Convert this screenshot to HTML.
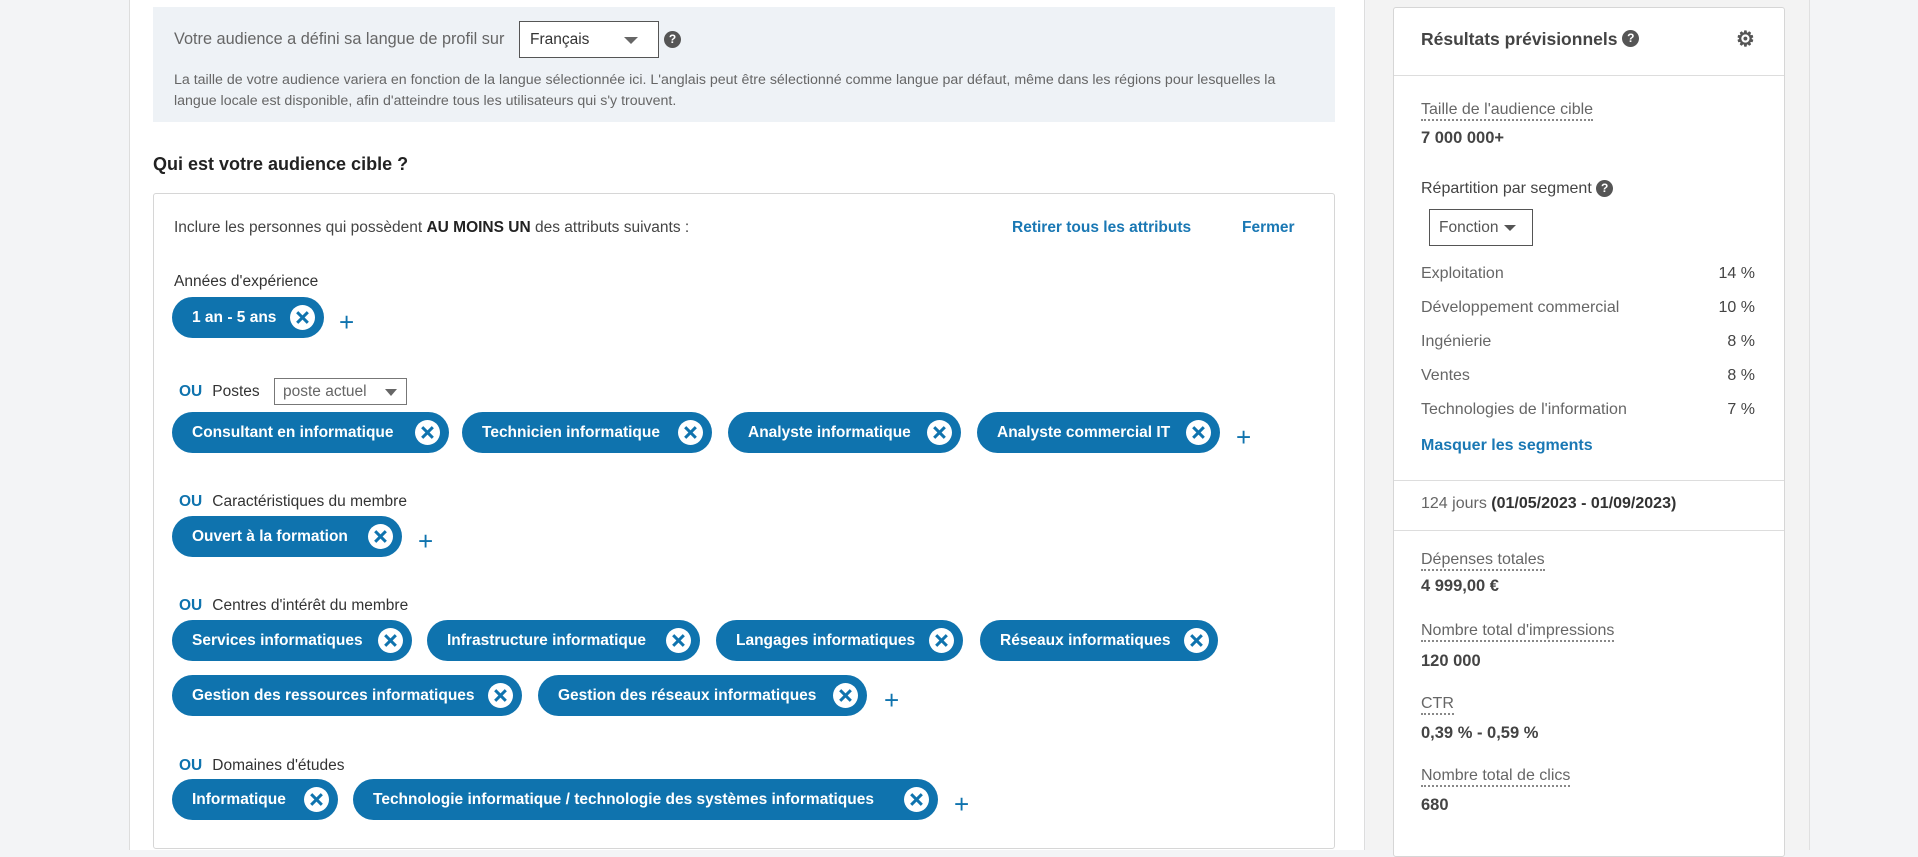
<!DOCTYPE html>
<html><head><meta charset="utf-8"><style>
*{margin:0;padding:0;box-sizing:border-box}
body{width:1918px;height:850px;overflow:hidden;background:#f3f4f6;font-family:"Liberation Sans",sans-serif;position:relative;color:#333}
.a{position:absolute;white-space:nowrap}
.main{position:absolute;left:129px;top:0;width:1236px;height:850px;background:#fff;border-left:1px solid #ddd;border-right:1px solid #ddd}
.gap{position:absolute;left:1366px;top:0;width:444px;height:850px;background:#f3f3f3;border-right:1px solid #e0e0e0}
.lang{position:absolute;left:153px;top:7px;width:1182px;height:115px;background:#eef2f6}
.box{position:absolute;left:153px;top:193px;width:1182px;height:656px;border:1px solid #d6d6d6;border-radius:3px;background:#fff}
.pill{position:absolute;height:41px;border-radius:21px;background:#0f73ae;color:#fff;font-weight:bold;font-size:15.5px;line-height:41px;padding-left:20px;white-space:nowrap}
.pill i{position:absolute;right:9px;top:8px;width:25px;height:25px;border-radius:50%;background:#fff}
.pill i:before,.pill i:after{content:"";position:absolute;left:11px;top:5px;width:3px;height:15px;background:#0f73ae;transform:rotate(45deg)}
.pill i:after{transform:rotate(-45deg)}
.plus{position:absolute;color:#0f73ae;font-size:26px;line-height:26px}
.lbl{position:absolute;font-size:15.5px;color:#333;white-space:nowrap}
.ou{color:#0f73ae;font-weight:bold;margin-right:10px}
.q{display:inline-block;width:17px;height:17px;border-radius:50%;background:#555;color:#fff;font-size:12px;font-weight:bold;text-align:center;line-height:17px;vertical-align:middle}
.panel{position:absolute;left:1393px;top:7px;width:392px;height:850px;background:#fff;border:1px solid #d6d6d6;border-radius:3px}
.dl{border-bottom:2px dotted #888;padding-bottom:1px;color:#666}
.rt{font-size:16px;color:#666}
.val{font-size:16.5px;color:#444;font-weight:bold}
</style></head><body>
<div class="main"></div>
<div class="gap"></div>
<div class="lang"></div>
<div class="a" style="left:174px;top:30px;font-size:16.3px;color:#666">Votre audience a défini sa langue de profil sur</div>
<div class="a" style="left:519px;top:21px;width:140px;height:37px;border:1px solid #555;background:#fff;font-size:15.5px;line-height:35px;padding-left:10px;color:#333">Français<span style="position:absolute;right:20px;top:15px;border-left:7px solid transparent;border-right:7px solid transparent;border-top:7px solid #666"></span></div>
<div class="a" style="left:664px;top:31px"><span class="q">?</span></div>
<div class="a" style="left:174px;top:70px;font-size:14.2px;color:#666;line-height:21px;white-space:normal;width:1140px">La taille de votre audience variera en fonction de la langue sélectionnée ici. L'anglais peut être sélectionné comme langue par défaut, même dans les régions pour lesquelles la langue locale est disponible, afin d'atteindre tous les utilisateurs qui s'y trouvent.</div>
<div class="a" style="left:153px;top:154px;font-size:18px;font-weight:bold;color:#222">Qui est votre audience cible ?</div>
<div class="box"></div>
<div class="a" style="left:174px;top:219px;font-size:15.5px;color:#444">Inclure les personnes qui possèdent <b style="color:#222">AU MOINS UN</b> des attributs suivants :</div>
<div class="a" style="left:1012px;top:219px;font-size:15.5px;font-weight:bold;color:#1a78b4">Retirer tous les attributs</div>
<div class="a" style="left:1242px;top:219px;font-size:15.5px;font-weight:bold;color:#1a78b4">Fermer</div>

<div class="lbl" style="left:174px;top:273px">Années d'expérience</div>
<div class="pill" style="left:172px;top:297px;width:152px">1 an - 5 ans<i></i></div>
<div class="plus" style="left:339px;top:309px">+</div>

<div class="lbl" style="left:179px;top:383px"><span class="ou">OU</span>Postes</div>
<div class="a" style="left:274px;top:378px;width:133px;height:27px;border:1px solid #777;font-size:15.5px;color:#666;line-height:25px;padding-left:8px">poste actuel<span style="position:absolute;right:9px;top:10px;border-left:6px solid transparent;border-right:6px solid transparent;border-top:7px solid #666"></span></div>
<div class="pill" style="left:172px;top:412px;width:277px">Consultant en informatique<i></i></div>
<div class="pill" style="left:462px;top:412px;width:250px">Technicien informatique<i></i></div>
<div class="pill" style="left:728px;top:412px;width:233px">Analyste informatique<i></i></div>
<div class="pill" style="left:977px;top:412px;width:243px">Analyste commercial IT<i></i></div>
<div class="plus" style="left:1236px;top:424px">+</div>

<div class="lbl" style="left:179px;top:493px"><span class="ou">OU</span>Caractéristiques du membre</div>
<div class="pill" style="left:172px;top:516px;width:230px">Ouvert à la formation<i></i></div>
<div class="plus" style="left:418px;top:528px">+</div>

<div class="lbl" style="left:179px;top:597px"><span class="ou">OU</span>Centres d'intérêt du membre</div>
<div class="pill" style="left:172px;top:620px;width:240px">Services informatiques<i></i></div>
<div class="pill" style="left:427px;top:620px;width:273px">Infrastructure informatique<i></i></div>
<div class="pill" style="left:716px;top:620px;width:247px">Langages informatiques<i></i></div>
<div class="pill" style="left:980px;top:620px;width:238px">Réseaux informatiques<i></i></div>
<div class="pill" style="left:172px;top:675px;width:350px">Gestion des ressources informatiques<i></i></div>
<div class="pill" style="left:538px;top:675px;width:329px">Gestion des réseaux informatiques<i></i></div>
<div class="plus" style="left:884px;top:687px">+</div>

<div class="lbl" style="left:179px;top:757px"><span class="ou">OU</span>Domaines d'études</div>
<div class="pill" style="left:172px;top:779px;width:166px">Informatique<i></i></div>
<div class="pill" style="left:353px;top:779px;width:585px">Technologie informatique / technologie des systèmes informatiques<i></i></div>
<div class="plus" style="left:954px;top:791px">+</div>

<div class="panel"></div>
<div class="a" style="left:1421px;top:29px;font-size:17.5px;font-weight:bold;color:#444">Résultats prévisionnels <span class="q" style="margin-top:-3px">?</span></div>
<div class="a" style="left:1736px;top:27px;font-size:21px;color:#555;font-weight:bold">⚙</div>
<div class="a" style="left:1394px;top:75px;width:390px;height:1px;background:#ddd"></div>
<div class="a rt" style="left:1421px;top:101px"><span class="dl">Taille de l'audience cible</span></div>
<div class="a val" style="left:1421px;top:129px">7 000 000+</div>
<div class="a" style="left:1421px;top:180px;font-size:16px;color:#444">Répartition par segment <span class="q">?</span></div>
<div class="a" style="left:1429px;top:209px;width:104px;height:37px;border:1px solid #555;font-size:15.5px;color:#555;line-height:35px;padding-left:9px">Fonction<span style="position:absolute;right:16px;top:15px;border-left:6px solid transparent;border-right:6px solid transparent;border-top:6px solid #555"></span></div>
<div class="a rt" style="left:1421px;top:265px">Exploitation</div><div class="a rt" style="left:1700px;top:265px;width:55px;text-align:right;color:#444">14 %</div>
<div class="a rt" style="left:1421px;top:299px">Développement commercial</div><div class="a rt" style="left:1700px;top:299px;width:55px;text-align:right;color:#444">10 %</div>
<div class="a rt" style="left:1421px;top:333px">Ingénierie</div><div class="a rt" style="left:1700px;top:333px;width:55px;text-align:right;color:#444">8 %</div>
<div class="a rt" style="left:1421px;top:367px">Ventes</div><div class="a rt" style="left:1700px;top:367px;width:55px;text-align:right;color:#444">8 %</div>
<div class="a rt" style="left:1421px;top:401px">Technologies de l'information</div><div class="a rt" style="left:1700px;top:401px;width:55px;text-align:right;color:#444">7 %</div>
<div class="a" style="left:1421px;top:437px;font-size:16px;font-weight:bold;color:#1a78b4">Masquer les segments</div>
<div class="a" style="left:1394px;top:480px;width:390px;height:1px;background:#ddd"></div>
<div class="a rt" style="left:1421px;top:495px">124 jours <b style="color:#333">(01/05/2023 - 01/09/2023)</b></div>
<div class="a" style="left:1394px;top:530px;width:390px;height:1px;background:#ddd"></div>
<div class="a rt" style="left:1421px;top:551px"><span class="dl">Dépenses totales</span></div>
<div class="a val" style="left:1421px;top:577px">4 999,00 €</div>
<div class="a rt" style="left:1421px;top:622px"><span class="dl">Nombre total d'impressions</span></div>
<div class="a val" style="left:1421px;top:652px">120 000</div>
<div class="a rt" style="left:1421px;top:695px"><span class="dl">CTR</span></div>
<div class="a val" style="left:1421px;top:724px">0,39 % - 0,59 %</div>
<div class="a rt" style="left:1421px;top:767px"><span class="dl">Nombre total de clics</span></div>
<div class="a val" style="left:1421px;top:796px">680</div>
</body></html>
